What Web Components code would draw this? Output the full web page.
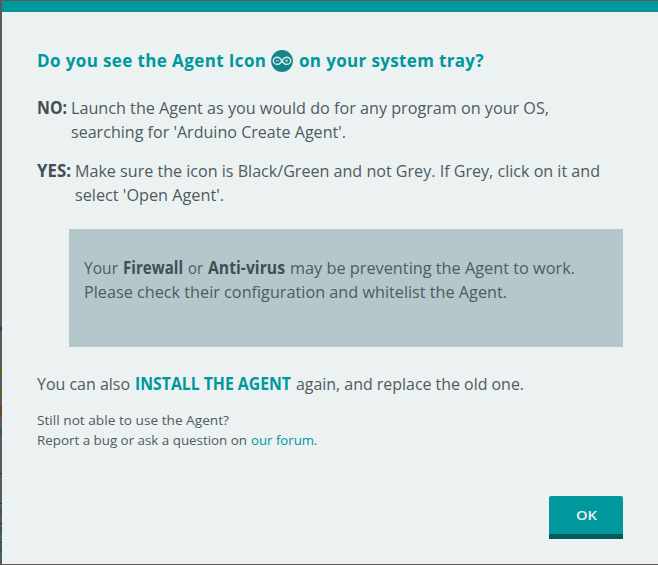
<!DOCTYPE html>
<html lang="en">
<head>
<meta charset="utf-8">
<title>Agent help</title>
<style>
html,body{margin:0;height:100%;overflow:hidden;background:#59595c}
body{font-family:"Open Sans","Noto Sans",sans-serif}
</style>
</head>
<body>
<agent-dialog></agent-dialog>
<script>
/* A run of text set to a given measure, by width or by tracking. */
class TextRun extends HTMLElement {
  constructor() {
    super();
    this.attachShadow({mode: 'open'}).innerHTML = `<style>
      :host{display:block;flex:none;white-space:nowrap}
      span{display:inline-block;transform-origin:0 0}
    </style><span><slot></slot></span>`;
  }
  connectedCallback() {
    const measure = +this.getAttribute('measure');
    const span = this.shadowRoot.querySelector('span');
    this.style.width = measure + 'px';
    const natural = span.getBoundingClientRect().width;
    if (this.hasAttribute('track'))
      span.style.letterSpacing = (measure - natural) / (this.textContent.length - 1) + 'px';
    else
      span.style.transform = `scaleX(${measure / natural})`;
  }
}

class ArduinoIcon extends HTMLElement {
  constructor() {
    super();
    this.attachShadow({mode: 'open'}).innerHTML = `<style>
      :host{display:block;flex:none;width:22px;height:22px}
      svg{display:block}
    </style>
    <svg width="22" height="22" viewBox="0 0 22 22" fill="none">
      <circle cx="11" cy="11" r="10.9" fill="#12868a"/>
      <path d="M11 10.8C9.7 8.6 8.4 7.2 6.3 7.2C4.1 7.2 2.3 8.8 2.3 10.8S4.1 14.4 6.3 14.4C8.4 14.4 9.7 13 11 10.8C12.3 8.6 13.6 7.2 15.7 7.2C17.9 7.2 19.7 8.8 19.7 10.8S17.9 14.4 15.7 14.4C13.6 14.4 12.3 13 11 10.8Z" stroke="#d7ebeb" stroke-width="1.4"/>
      <path d="M4.9 10.8H7.6M14.3 10.8H17M15.65 9.5V12.1" stroke="#d7ebeb" stroke-width=".9"/>
    </svg>`;
  }
}

class AnswerItem extends HTMLElement {
  constructor() {
    super();
    this.attachShadow({mode: 'open'}).innerHTML = `<style>
      :host{display:flex;gap:4px;line-height:24px;margin-bottom:15px}
      .label{font-weight:700;color:#434f54}
    </style><div class="label"><slot name="label"></slot></div><div><slot></slot></div>`;
  }
}

class NoticeBox extends HTMLElement {
  constructor() {
    super();
    this.attachShadow({mode: 'open'}).innerHTML = `<style>
      :host{display:block;box-sizing:border-box;height:118px;margin:7px 0 0 32px;padding:27px 15px;background:#b4c7cb;line-height:24px}
    </style><slot></slot>`;
  }
}

class ActionButton extends HTMLElement {
  constructor() {
    super();
    this.attachShadow({mode: 'open'}).innerHTML = `<style>
      :host{display:block}
      button{display:flex;justify-content:center;box-sizing:border-box;width:74px;height:43px;margin:0;padding:9px 1px 0 0;border:0;border-bottom:5px solid #005c5f;border-radius:2px 2px 0 0;background:#00979d;color:#ecf1f1;font:600 13px/20px "Open Sans",sans-serif}
    </style><button><slot></slot></button>`;
  }
}

class AgentDialog extends HTMLElement {
  constructor() {
    super();
    this.attachShadow({mode: 'open'}).innerHTML = `<style>
      :host{display:flex;flex-direction:column;box-sizing:border-box;height:563px;margin:1px 0 1px 2px;padding:36px 35px 25px;border-top:11px solid #00979d;background:#ecf1f1;color:#4e5b61;font-size:17px}
      h2{display:flex;align-items:center;margin:0 0 24px;height:24px;line-height:24px;font-size:17px;font-weight:700;color:#00979d}
      h2 text-run{padding-top:1px}
      arduino-icon{margin:2px 6px 0 5px}
      .line{display:flex;gap:5px}
      strong{font-weight:700;color:#434f54}
      a{color:#00979d;text-decoration:none}
      .install{line-height:24px;margin-top:25px}
      .install a{font-weight:700}
      .small{font-size:13.5px;line-height:20px;margin-top:14px}
      .small .line{gap:4px}
      .actions{display:flex;justify-content:flex-end;margin-top:auto}
    </style>
    <h2><text-run track measure="229">Do you see the Agent Icon</text-run><arduino-icon></arduino-icon><text-run track measure="184.5">on your system tray?</text-run></h2>
    <answer-item>
      <text-run slot="label" measure="30">NO:</text-run>
      <text-run measure="478">Launch the Agent as you would do for any program on your OS,</text-run>
      <text-run measure="275">searching for 'Arduino Create Agent'.</text-run>
    </answer-item>
    <answer-item>
      <text-run slot="label" measure="34">YES:</text-run>
      <text-run measure="525">Make sure the icon is Black/Green and not Grey. If Grey, click on it and</text-run>
      <text-run measure="149">select 'Open Agent'.</text-run>
    </answer-item>
    <notice-box>
      <div class="line"><text-run measure="34">Your</text-run><strong><text-run measure="60">Firewall</text-run></strong><text-run measure="15">or</text-run><strong><text-run measure="77">Anti-virus</text-run></strong><text-run measure="285">may be preventing the Agent to work.</text-run></div>
      <text-run measure="423">Please check their configuration and whitelist the Agent.</text-run>
    </notice-box>
    <div class="install line"><text-run measure="93">You can also</text-run><a href="#"><text-run measure="156">INSTALL THE AGENT</text-run></a><text-run measure="228">again, and replace the old one.</text-run></div>
    <div class="small">
      <text-run measure="192">Still not able to use the Agent?</text-run>
      <div class="line"><text-run measure="210">Report a bug or ask a question on</text-run><a href="#"><text-run measure="63">our forum</text-run></a><text-run measure="3" style="margin-left:-4px">.</text-run></div>
    </div>
    <div class="actions"><action-button><text-run measure="21">OK</text-run></action-button></div>`;
  }
}

/* Sliver of the dimmed page that shows left of the dialog: [top, height, colour]. */
class PageEdge extends HTMLElement {
  constructor() {
    super();
    const marks = [[327,4,'#3c3f4b'],[366,8,'#625f20'],[386,8,'#625f20'],[406,9,'#6b4520'],
      [428,7,'#285f63'],[473,1,'#123f42'],[503,1,'#123f42'],[508,6,'#285f63'],
      [523,1,'#123f42'],[527,6,'#285f63'],[542,1,'#123f42'],[546,6,'#285f63']];
    this.attachShadow({mode: 'open'}).innerHTML = `<style>
      :host{position:absolute;left:0;top:0;width:2px;height:565px}
      i{position:absolute;left:0;width:2px}
    </style>` + marks.map(([y, h, c]) => `<i style="top:${y}px;height:${h}px;background:${c}"></i>`).join('');
  }
}

customElements.define('page-edge', PageEdge);
customElements.define('arduino-icon', ArduinoIcon);
customElements.define('answer-item', AnswerItem);
customElements.define('notice-box', NoticeBox);
customElements.define('action-button', ActionButton);
customElements.define('agent-dialog', AgentDialog);
customElements.define('text-run', TextRun);
document.body.append(document.createElement('page-edge'));
</script>
</body>
</html>
